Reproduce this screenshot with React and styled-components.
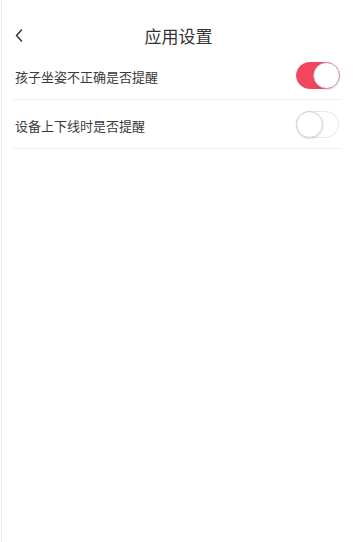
import React, { useState } from 'react';
import styled, { createGlobalStyle } from 'styled-components';

const GlobalStyle = createGlobalStyle`
  html, body {
    margin: 0;
    padding: 0;
    background: #fff;
  }
  body {
    font-family: "Noto Sans CJK SC", "Noto Sans", sans-serif;
  }
`;

const Page = styled.div`
  margin-left: 1px;
  border-left: 1px solid #ececec;
  min-height: 542px;
  box-sizing: border-box;
  background: #fff;
`;

const Header = styled.div`
  position: relative;
  height: 51px;
  padding-top: 20px;
  box-sizing: border-box;
  display: flex;
  align-items: center;
  justify-content: center;
`;

const BackButton = styled.div`
  position: absolute;
  left: 10px;
  top: 27px;
  width: 14px;
  height: 16px;
  display: flex;
  align-items: center;
  justify-content: center;
`;

const Title = styled.div`
  font-size: 17px;
  color: #333;
  line-height: 1;
  margin-left: 2px;
`;

const List = styled.div`
  margin: 0 11px;
`;

const Row = styled.div`
  height: 48px;
  border-bottom: 1px solid #f0f0f0;
  display: flex;
  align-items: center;
  justify-content: space-between;
  padding: 0 3px 0 2px;
`;

const Label = styled.div`
  font-size: 13px;
  color: #3a3a3a;
  line-height: 1;
  margin-top: ${(p) => p.$offset || 0}px;
`;

const Track = styled.div`
  position: relative;
  width: 43px;
  height: 27px;
  border-radius: 14px;
  box-sizing: border-box;
  background: ${(p) => (p.$on ? '#f2465e' : '#fff')};
  border: 1px solid ${(p) => (p.$on ? '#f2465e' : '#e6e6e6')};
  margin-top: ${(p) => p.$offset || 0}px;
  cursor: pointer;
`;

const Knob = styled.div`
  position: absolute;
  top: -1px;
  left: ${(p) => (p.$on ? '16px' : '-1px')};
  width: 27px;
  height: 27px;
  border-radius: 50%;
  box-sizing: border-box;
  background: #fff;
  border: 1px solid ${(p) => (p.$on ? '#d98a95' : '#cfcfcf')};
  box-shadow: 0 1px 2px rgba(0, 0, 0, 0.12);
`;

function Toggle({ on, onClick, offset }) {
  return (
    <Track $on={on} $offset={offset} onClick={onClick}>
      <Knob $on={on} />
    </Track>
  );
}

export default function App() {
  const [posture, setPosture] = useState(true);
  const [online, setOnline] = useState(false);

  return (
    <>
      <GlobalStyle />
      <Page>
        <Header>
          <BackButton>
            <svg width="8" height="13" viewBox="0 0 8 13">
              <polyline
                points="6.5,1 1.5,6.5 6.5,12"
                fill="none"
                stroke="#333"
                strokeWidth="1.5"
                strokeLinecap="round"
                strokeLinejoin="round"
              />
            </svg>
          </BackButton>
          <Title>应用设置</Title>
        </Header>
        <List>
          <Row>
            <Label $offset={3}>孩子坐姿不正确是否提醒</Label>
            <Toggle on={posture} onClick={() => setPosture(!posture)} />
          </Row>
          <Row>
            <Label $offset={3}>设备上下线时是否提醒</Label>
            <Toggle on={online} onClick={() => setOnline(!online)} />
          </Row>
        </List>
      </Page>
    </>
  );
}
